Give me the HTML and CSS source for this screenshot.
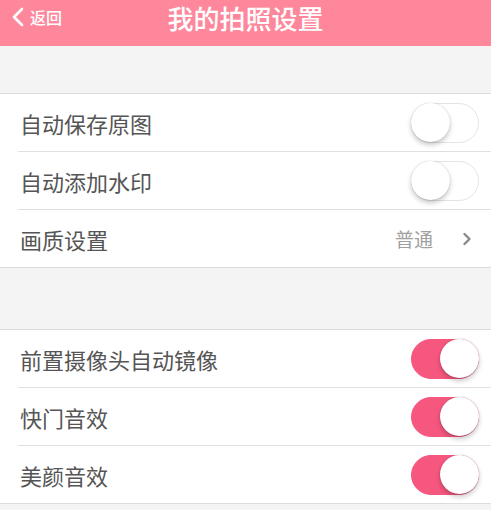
FILE: index.html
```html
<!DOCTYPE html>
<html lang="zh">
<head>
<meta charset="utf-8">
<link rel="stylesheet" href="styles.css">
</head>
<body>
<header class="nav">
  <div class="back">
    <svg class="back-icon" width="14" height="20" viewBox="0 0 14 20"><path d="M11 2 L3 10 L11 18" fill="none" stroke="#fff" stroke-width="2.6" stroke-linecap="round" stroke-linejoin="round"/></svg>
    <span class="back-text">返回</span>
  </div>
  <h1 class="title">我的拍照设置</h1>
  <div class="nav-side"></div>
</header>
<div class="spacer first"></div>
<section class="group">
  <div class="row"><span class="label">自动保存原图</span><span class="switch"><span class="knob"></span></span></div>
  <div class="row"><span class="label">自动添加水印</span><span class="switch"><span class="knob"></span></span></div>
  <div class="row"><span class="label">画质设置</span><span class="value">普通</span><svg class="chev" width="10" height="14" viewBox="0 0 10 14"><path d="M2.5 2 L7.5 7 L2.5 12" fill="none" stroke="#8a8a8a" stroke-width="2.4" stroke-linecap="round" stroke-linejoin="round"/></svg></div>
</section>
<div class="spacer"></div>
<section class="group">
  <div class="row"><span class="label">前置摄像头自动镜像</span><span class="switch on"><span class="knob"></span></span></div>
  <div class="row"><span class="label">快门音效</span><span class="switch on"><span class="knob"></span></span></div>
  <div class="row"><span class="label">美颜音效</span><span class="switch on"><span class="knob"></span></span></div>
</section>
</body>
</html>
```
FILE: styles.css
```css
html, body {
  margin: 0;
  padding: 0;
  background: #f4f4f4;
  font-family: "Noto Sans CJK SC", "Noto Sans", sans-serif;
}
.nav {
  height: 46px;
  background: #fe879b;
  display: grid;
  grid-template-columns: 1fr auto 1fr;
  align-items: start;
}
.back {
  display: flex;
  align-items: center;
  padding: 7px 0 0 11px;
  color: #fff;
}
.back-icon {
  display: block;
}
.back-text {
  font-size: 16px;
  line-height: 20px;
  margin-left: 5px;
  font-weight: 500;
}
.title {
  margin: 0;
  padding-top: 1px;
  color: #fff;
  font-size: 26px;
  font-weight: 500;
  line-height: 34px;
  white-space: nowrap;
}
.spacer {
  height: 61px;
}
.spacer.first {
  height: 47px;
}
.group {
  background: #fff;
  border-top: 1px solid #dcdcdc;
  border-bottom: 1px solid #dcdcdc;
}
.row {
  height: 57px;
  display: flex;
  align-items: center;
  padding-left: 20px;
  padding-right: 12px;
  position: relative;
}
.row + .row {
  border-top: 1px solid transparent;
}
.row + .row::before {
  content: "";
  position: absolute;
  left: 18px;
  right: 0;
  top: -1px;
  height: 1px;
  background: #e0e0e0;
}
.label {
  flex: 1;
  font-size: 22px;
  color: #555;
  line-height: 30px;
}
.value {
  font-size: 19px;
  color: #a0a0a0;
  margin-right: 29px;
}
.chev {
  display: block;
  margin-right: 7px;
}
.switch {
  width: 68px;
  height: 40px;
  box-sizing: border-box;
  border-radius: 20px;
  border: 1.5px solid #e4e4e4;
  background: #fff;
  position: relative;
  display: block;
}
.knob {
  position: absolute;
  top: -1px;
  left: -1px;
  width: 39px;
  height: 39px;
  border-radius: 50%;
  background: #fff;
  box-shadow: 0 3px 5px rgba(0,0,0,0.22), 0 0 1px rgba(0,0,0,0.25);
}
.switch.on {
  background: #f6577f;
  border-color: #f6577f;
}
.switch.on .knob {
  left: auto;
  right: -1px;
  box-shadow: 0 3px 5px rgba(0,0,0,0.22), 0 0 1px rgba(120,0,30,0.5);
}
```
